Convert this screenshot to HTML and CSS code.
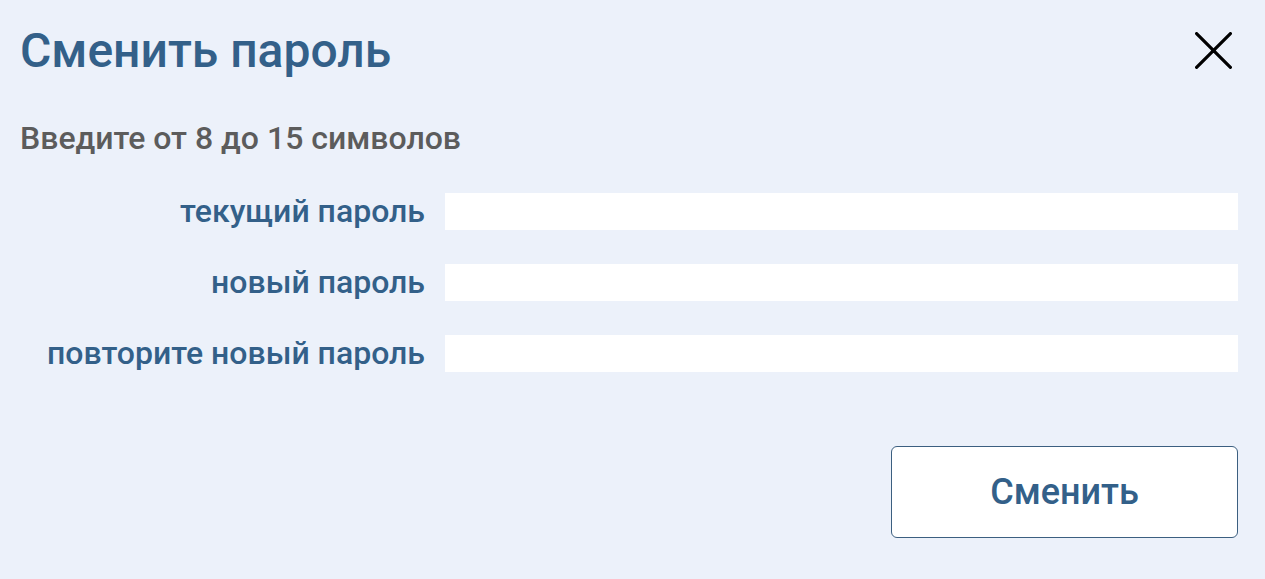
FILE: index.html
```html
<!DOCTYPE html>
<html lang="ru">
<head>
<meta charset="utf-8">
<title>Сменить пароль</title>
<link rel="stylesheet" href="styles.css">
</head>
<body>
<div class="dialog">
  <div class="header">
    <h1 class="title">Сменить пароль</h1>
    <button class="close" aria-label="Закрыть">
      <svg width="37" height="37" viewBox="0 0 37 37"><path d="M1.6 1.6 L35.4 35.4 M35.4 1.6 L1.6 35.4" stroke="#000" stroke-width="3.2" stroke-linecap="round" fill="none"/></svg>
    </button>
  </div>
  <p class="hint">Введите от 8 до 15 символов</p>
  <div class="form">
    <label class="label">текущий пароль</label><input class="field" type="password">
    <label class="label">новый пароль</label><input class="field" type="password">
    <label class="label">повторите новый пароль</label><input class="field" type="password">
  </div>
  <div class="actions">
    <button class="submit">Сменить</button>
  </div>
</div>
</body>
</html>
```
FILE: styles.css
```css
html, body { margin: 0; padding: 0; }
body {
  background: #ecf1fa;
  font-family: Roboto, "Noto Sans", sans-serif;
  width: 1265px;
  height: 579px;
  overflow: hidden;
}
.dialog { padding: 0 27px 0 20px; }
.header {
  display: flex;
  justify-content: space-between;
  align-items: center;
  height: 100px;
}
.title {
  margin: 0;
  font-size: 48px;
  font-weight: 500;
  color: #336089;
}
.close {
  background: none;
  border: 0;
  padding: 0;
  width: 37px;
  height: 37px;
  margin-right: 6px;
  cursor: pointer;
}
.close svg { display: block; }
.hint {
  margin: 20px 0 0;
  font-size: 32px;
  line-height: 37px;
  font-weight: 500;
  color: #5c5c5c;
}
.form {
  display: grid;
  grid-template-columns: 405px 1fr;
  column-gap: 20px;
  row-gap: 34px;
  margin-top: 36px;
  align-items: center;
}
.label {
  text-align: right;
  font-size: 32px;
  line-height: 37px;
  font-weight: 500;
  color: #336089;
}
.field {
  height: 37px;
  border: 0;
  background: #fff;
  padding: 0;
  box-sizing: border-box;
}
.actions {
  display: flex;
  justify-content: flex-end;
  margin-top: 74px;
}
.submit {
  width: 347px;
  height: 92px;
  background: #fff;
  border: 1px solid #3c5f80;
  border-radius: 6px;
  font-family: Roboto, sans-serif;
  font-size: 36px;
  font-weight: 500;
  color: #336089;
}
```
